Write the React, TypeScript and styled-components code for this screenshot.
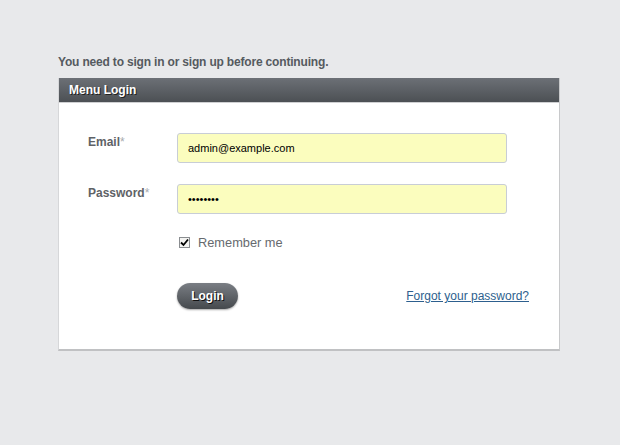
import React, { useState } from 'react';
import styled, { createGlobalStyle } from 'styled-components';

const GlobalStyle = createGlobalStyle`
  html, body {
    margin: 0;
    padding: 0;
    background: #e8e9eb;
    font-family: "Liberation Sans", Arial, sans-serif;
  }
`;

const Page = styled.div`
  padding: 55px 0 0 58px;
  width: 502px;
`;

const Notice = styled.p`
  margin: 0 0 8px 0;
  font-size: 12px;
  font-weight: bold;
  color: #555a5f;
  line-height: 15px;
  letter-spacing: -0.18px;
`;

const Panel = styled.div`
  background: #fff;
  border-left: 1px solid #d6d7d9;
  border-right: 1px solid #c8c9cb;
  border-bottom: 2px solid #c0c1c3;
`;

const PanelHeader = styled.div`
  height: 24px;
  line-height: 24px;
  padding-left: 10px;
  background: linear-gradient(#6c7076, #4c5054);
  border-bottom: 1px solid #cfd0d2;
  color: #fff;
  font-size: 12px;
  font-weight: bold;
  text-shadow: 1px 1px 0 #222;
`;

const PanelBody = styled.form`
  padding: 30px 30px 40px 29px;
  display: flex;
  flex-direction: column;
`;

const Row = styled.div<{ $gap?: number }>`
  display: flex;
  align-items: flex-start;
  margin-bottom: ${p => p.$gap ?? 0}px;
`;

const Label = styled.label`
  width: 89px;
  padding-top: 2px;
  font-size: 12px;
  font-weight: bold;
  color: #5e6266;
  line-height: 15px;
`;

const Req = styled.span`
  color: #a8abae;
  font-weight: normal;
`;

const Field = styled.input`
  box-sizing: border-box;
  width: 330px;
  height: 30px;
  padding: 0 10px;
  border: 1px solid #c8cdd6;
  border-radius: 3px;
  background: #fbfdbe;
  font-family: "Liberation Sans", Arial, sans-serif;
  font-size: 11px;
  color: #000;
  outline: none;
`;

const CheckRow = styled.label`
  margin-left: 91px;
  display: flex;
  align-items: center;
  gap: 8px;
  font-size: 12.8px;
  line-height: 16px;
  color: #666a6e;
`;

const Box = styled.span`
  box-sizing: border-box;
  width: 11px;
  height: 11px;
  margin-top: -2px;
  border: 1px solid #8a8d90;
  background: #f4f4f2;
  display: flex;
  align-items: center;
  justify-content: center;
`;

const Actions = styled.div`
  margin-left: 89px;
  margin-top: 32px;
  display: flex;
  align-items: center;
  justify-content: space-between;
  width: 352px;
`;

const LoginButton = styled.button`
  width: 61px;
  height: 26px;
  border: none;
  border-radius: 13px;
  background: linear-gradient(#7a7e84, #45494d);
  box-shadow: 0 1px 2px rgba(0, 0, 0, 0.35);
  color: #fff;
  font-family: "Liberation Sans", Arial, sans-serif;
  font-size: 12px;
  font-weight: bold;
  text-shadow: 1px 1px 0 #111;
  cursor: pointer;
  padding: 0;
`;

const Forgot = styled.a`
  font-size: 12px;
  color: #2d5f8e;
  text-decoration: underline;
`;

const App = () => {
  const [remember, setRemember] = useState(true);

  return (
    <>
      <GlobalStyle />
      <Page>
        <Notice>You need to sign in or sign up before continuing.</Notice>
        <Panel>
          <PanelHeader>Menu Login</PanelHeader>
          <PanelBody onSubmit={e => e.preventDefault()}>
            <Row $gap={21}>
              <Label>
                Email<Req>*</Req>
              </Label>
              <Field type="text" defaultValue="admin@example.com" />
            </Row>
            <Row $gap={21}>
              <Label>
                Password<Req>*</Req>
              </Label>
              <Field type="password" defaultValue="password" />
            </Row>
            <CheckRow onClick={() => setRemember(!remember)}>
              <Box>
                {remember && (
                  <svg width="9" height="9" viewBox="0 0 9 9">
                    <path d="M1 4.5 L3.5 7 L8 1.5" fill="none" stroke="#000" strokeWidth="1.8" />
                  </svg>
                )}
              </Box>
              Remember me
            </CheckRow>
            <Actions>
              <LoginButton type="submit">Login</LoginButton>
              <Forgot href="#">Forgot your password?</Forgot>
            </Actions>
          </PanelBody>
        </Panel>
      </Page>
    </>
  );
};

export default App;
